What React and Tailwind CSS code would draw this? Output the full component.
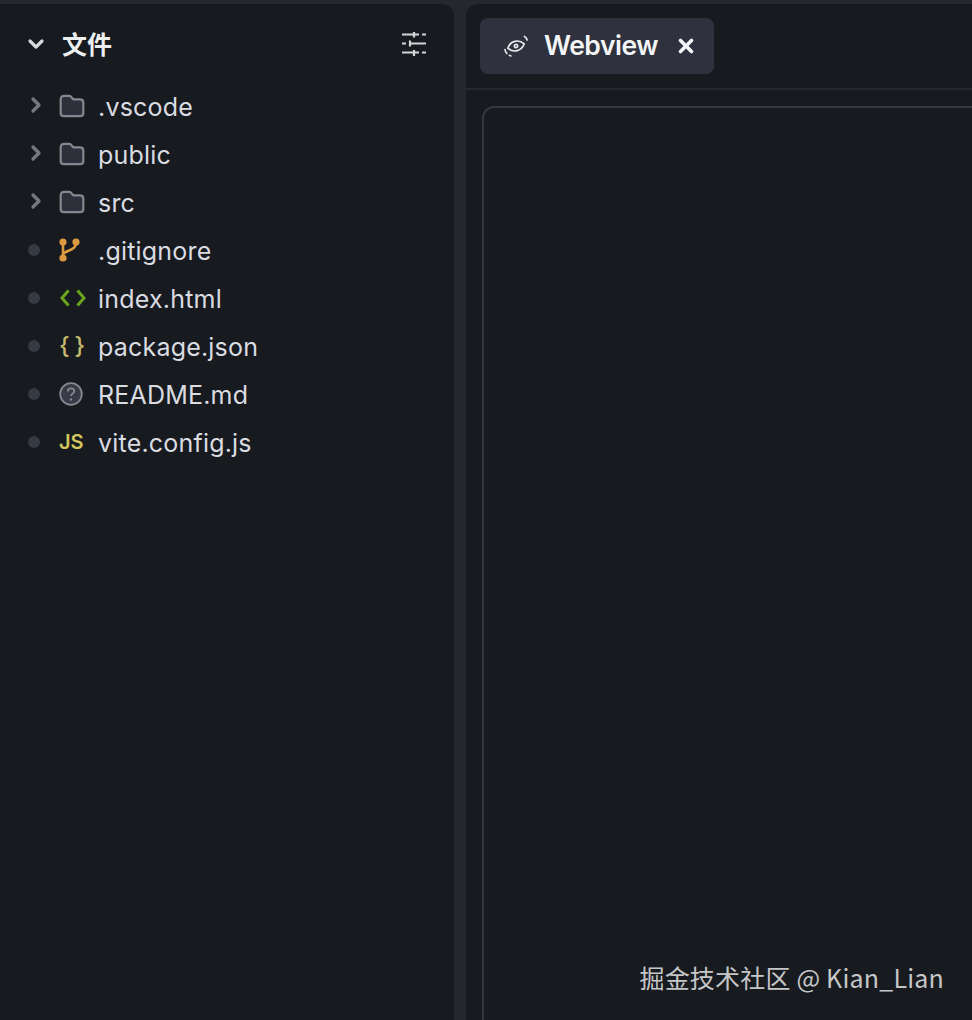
import { ChevronDown, ChevronRight, X } from "lucide-react";

const FolderIcon = () => (
  <svg width="26" height="24" viewBox="0 0 26 24" fill="none">
    <path
      d="M5 1.800h5c1 0 1.600.4 2.200 1.100l1.300 1.600c.5.6 1 .8 1.800.8H21c2.100 0 3.300 1.200 3.300 3.300v10.300c0 2.100-1.200 3.300-3.300 3.300H5c-2.100 0-3.300-1.200-3.300-3.300V5.100c0-2.100 1.200-3.300 3.300-3.300z"
      fill="#2d303a"
      stroke="#85888f"
      strokeWidth="2.200"
    />
  </svg>
);

const GitIcon = () => (
  <svg width="22" height="24" viewBox="0 0 22 24" fill="none" stroke="#dd9a40" strokeWidth="2.600">
    <path d="M4 3v18M17 4c0 6-3.500 7-7 8.500-3 1.200-5 2-6 4" />
    <circle cx="4" cy="4" r="2.300" fill="#dd9a40" />
    <circle cx="17" cy="4" r="2.300" fill="#dd9a40" />
    <circle cx="4" cy="20" r="2.300" fill="#dd9a40" />
  </svg>
);

const CodeIcon = () => (
  <svg width="28" height="20" viewBox="0 0 28 20" fill="none" stroke="#6aa51f" strokeWidth="3">
    <path d="M9.500 2.500 3 10l6.500 7.500M18.500 2.500 25 10l-6.500 7.500" />
  </svg>
);

const QuestionIcon = () => (
  <svg width="24" height="24" viewBox="0 0 24 24" fill="none">
    <circle cx="12" cy="12" r="10.800" fill="#383b47" stroke="#85888f" strokeWidth="1.800" />
    <path d="M8.800 9.500c0-2 1.400-3.200 3.300-3.200s3.200 1.200 3.200 2.800c0 2.500-3.300 2.500-3.300 5" stroke="#85888f" strokeWidth="1.800" />
    <circle cx="12" cy="17.500" r="1.200" fill="#85888f" />
  </svg>
);

const EyeIcon = () => (
  <svg width="26" height="26" viewBox="0 0 26 26" fill="none" stroke="#e8e9ec" strokeWidth="1.700" strokeLinecap="round">
    <g transform="rotate(-15 13 13)">
      <path d="M4.500 13c2.200-3.200 5-4.800 8.500-4.800s6.300 1.600 8.500 4.800c-2.200 3.200-5 4.800-8.500 4.800S6.700 16.200 4.500 13z" />
      <circle cx="13" cy="13" r="1.600" />
    </g>
    <path d="M21.500 3.500c1.400.8 2.300 2 2.600 3.500M2 16.500c.2 1.600.8 2.900 1.800 3.900M6.500 22.300l1.300.6" />
  </svg>
);

const SlidersIcon = () => (
  <svg width="26" height="24" viewBox="0 0 26 24" fill="none" stroke="#d4d5d8" strokeWidth="2.200">
    <path d="M1 2.500h17M21 2.500h4M1 11.500h4M8 11.500h17M1 20.500h17M21 20.500h4" />
    <path d="M13 0v5.500M9 8.500v6M13 18v6" />
  </svg>
);

const files = [
  { name: ".vscode", type: "folder" },
  { name: "public", type: "folder" },
  { name: "src", type: "folder" },
  { name: ".gitignore", icon: <GitIcon /> },
  { name: "index.html", icon: <CodeIcon /> },
  {
    name: "package.json",
    icon: <span className="text-[24px] font-medium tracking-[5px] text-[#c4b96c]">{"{}"}</span>,
  },
  { name: "README.md", icon: <QuestionIcon /> },
  {
    name: "vite.config.js",
    icon: <span className="text-[20px] font-semibold text-[#d3c65c]">JS</span>,
  },
];

const FileRow = ({ file }) => (
  <div className="flex h-12 items-center">
    <div className="flex w-[58px] shrink-0 items-center pl-[24px]">
      {file.type === "folder" ? (
        <ChevronRight size={24} strokeWidth={3.4} className="-mt-[6px] text-[#75787d]" />
      ) : (
        <div className="-mt-[4px] ml-[4px] h-3 w-3 rounded-full bg-[#363a42]" />
      )}
    </div>
    <div className="-mt-[4px] flex w-[40px] shrink-0 items-center pl-[1px]">
      {file.type === "folder" ? <FolderIcon /> : file.icon}
    </div>
    <span className="text-[25px] tracking-[0.2px] text-[#d9dce1]">{file.name}</span>
  </div>
);

export default function App() {
  return (
    <div className="relative flex h-[1020px] w-[972px] gap-3 overflow-hidden bg-[#24282c] pt-1 font-['Inter',sans-serif]">
      {/* file tree */}
      <aside className="w-[454px] shrink-0 rounded-tr-xl bg-[#171a1f]">
        <div className="flex h-20 items-center pl-6 pr-[27px]">
          <ChevronDown size={24} strokeWidth={3.2} className="text-[#d8d9dc]" />
          <span className="ml-[14px] flex-1 font-['Noto_Sans_CJK_SC',sans-serif] text-[25px] font-bold text-[#eceef0]">
            文件
          </span>
          <SlidersIcon />
        </div>
        <div>
          {files.map((file) => (
            <FileRow key={file.name} file={file} />
          ))}
        </div>
      </aside>

      {/* webview */}
      <main className="flex-1 rounded-tl-xl bg-[#171a1f]">
        <div className="h-[86px] border-b-2 border-[#25282c] px-[14px] pt-[14px]">
          <div className="flex h-14 w-[234px] items-center rounded-lg bg-[#2f323e] pl-[23px]">
            <EyeIcon />
            <span className="ml-[15px] text-[26.500px] font-semibold tracking-[-0.5px] text-[#f4f5f7]">Webview</span>
            <X size={22} strokeWidth={4} className="ml-[17px] text-[#f4f5f7]" />
          </div>
        </div>
        <div className="ml-4 mt-4 h-[940px] rounded-tl-xl border-l-2 border-t-2 border-[#33363a]" />
      </main>

      <div className="absolute bottom-[30px] right-[28px] font-['Noto_Sans_CJK_SC',sans-serif] text-[25px] leading-none tracking-[0.2px] text-[#c5c6c8]">
        掘金技术社区 @ Kian_Lian
      </div>
    </div>
  );
}
